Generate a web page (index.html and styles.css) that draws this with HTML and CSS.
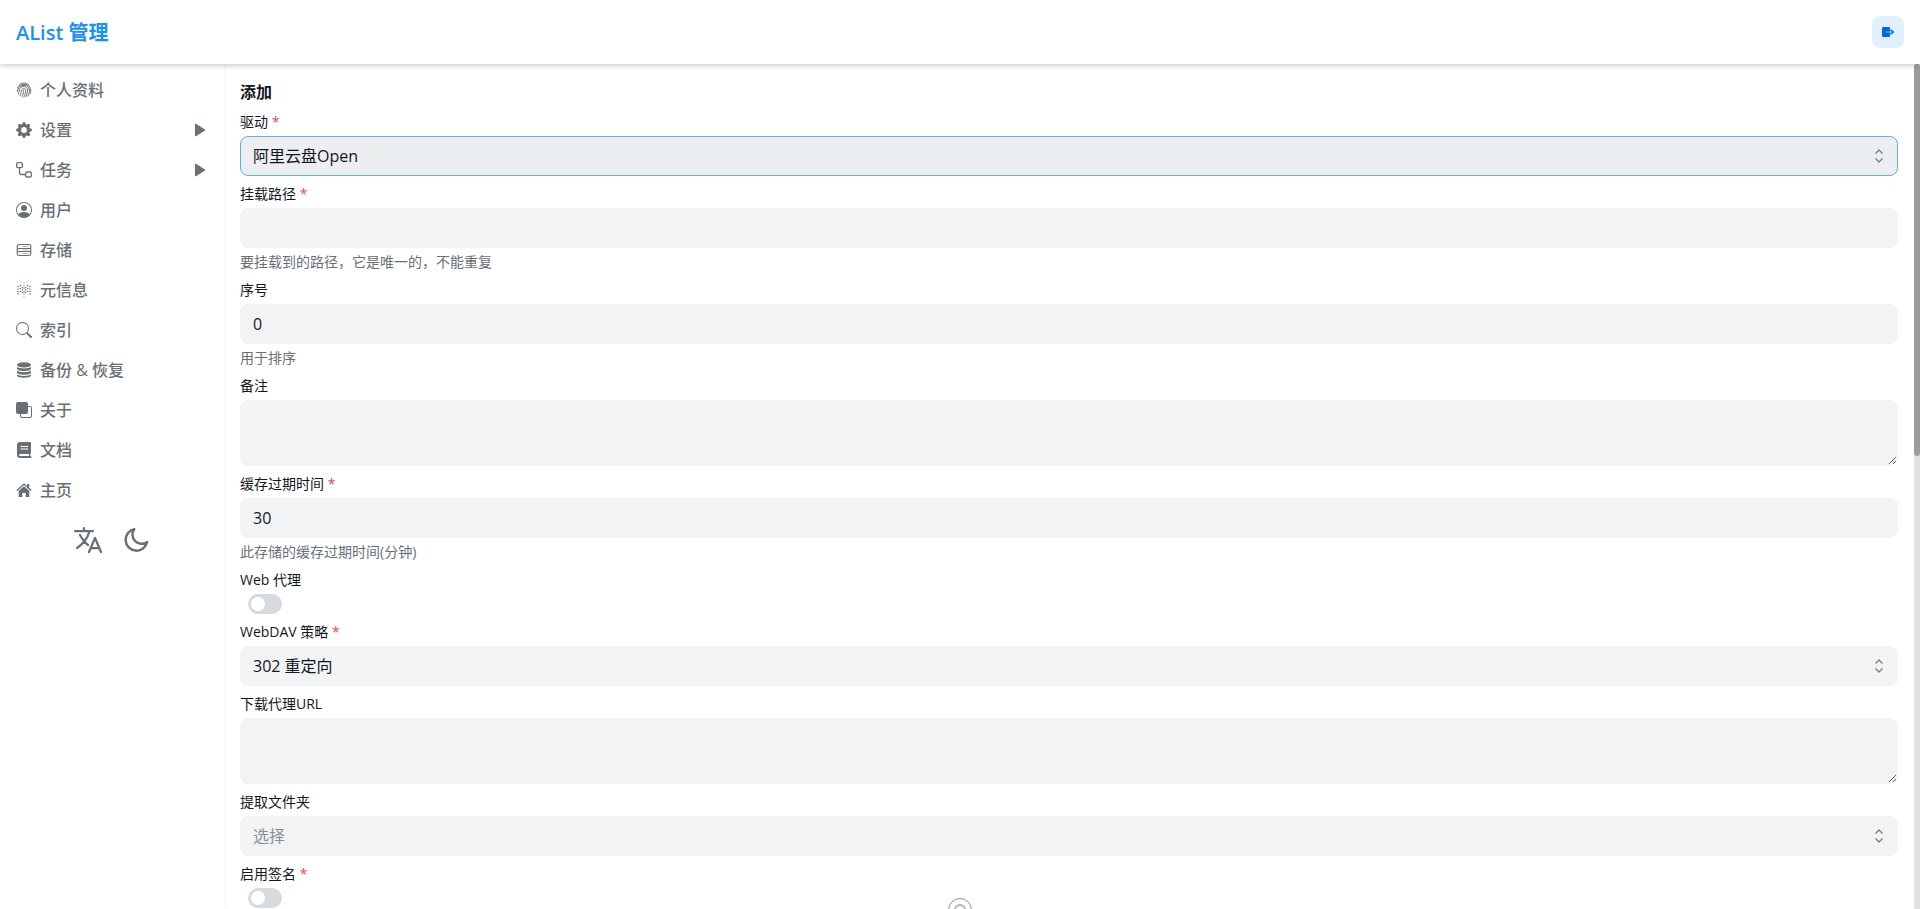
FILE: index.html
```
<!DOCTYPE html>
<html lang="zh-CN">
  <head>
    <meta charset="UTF-8" />
    <meta name="viewport" content="width=device-width, initial-scale=1.0" />
    <title>AList 管理</title>
    <link rel="stylesheet" href="styles.css">
  </head>
  <body>
    <header class="header">
      <a class="brand" href="#">AList 管理</a>
      <button class="logout" type="button" aria-label="退出登录">
        <svg viewBox="0 0 16 16" width="16" height="16">
          <rect x="2" y="3" width="8" height="10" rx="1.300" fill="currentColor"/>
          <path fill="#4d9bea" d="M6 7.300h4.500v1.400H6z"/>
          <path fill="currentColor" d="M10.600 4.700L14.400 8l-3.800 3.300V8.700h1V7.300h-1z"/>
        </svg>
      </button>
    </header>

    <div class="layout">
      <aside class="sidebar">
        <nav class="menu">
          <a class="menu-item" href="#">
            <svg class="icon" viewBox="0 0 16 16" fill="none" stroke="currentColor" stroke-width="1" stroke-linecap="round">
              <path d="M3.500 2.600C6 .4 10 .4 12.500 2.600M1.500 6C3 1.400 13 .6 14.300 6M1.200 9.500C1.500 2 13 1.200 13.200 7.500M2.300 12c1.200-2 .4-3.600 1.400-5.400C5.500 3.400 11.300 3.800 11.500 8c0 2-.4 4-1.400 6.500M4 13.500c1.600-2.400.8-4 1.500-5.500.8-1.900 4.200-1.700 4.200.6 0 2-.6 4-1.800 6.400M6 14.500c1.300-2.200 1.600-4.200 1.600-6.200M12 14c1.200-2 1.600-4 1.500-6M14.300 11.500c.5-1.500.6-3 .3-4.500"/>
            </svg>
            <span>个人资料</span>
          </a>
          <a class="menu-item" href="#">
            <svg class="icon" viewBox="0 0 16 16" fill="currentColor">
              <path d="M9.405 1.050c-.413-1.400-2.397-1.400-2.810 0l-.1.340a1.464 1.464 0 0 1-2.105.872l-.310-.170c-1.283-.698-2.686.705-1.987 1.987l.169.311c.446.820.023 1.841-.872 2.105l-.340.100c-1.400.413-1.400 2.397 0 2.810l.340.100a1.464 1.464 0 0 1 .872 2.105l-.170.310c-.698 1.283.705 2.686 1.987 1.987l.311-.169a1.464 1.464 0 0 1 2.105.872l.100.340c.413 1.400 2.397 1.400 2.810 0l.100-.340a1.464 1.464 0 0 1 2.105-.872l.310.170c1.283.698 2.686-.705 1.987-1.987l-.169-.311a1.464 1.464 0 0 1 .872-2.105l.340-.100c1.400-.413 1.400-2.397 0-2.810l-.340-.100a1.464 1.464 0 0 1-.872-2.105l.170-.310c.698-1.283-.705-2.686-1.987-1.987l-.311.169a1.464 1.464 0 0 1-2.105-.872l-.100-.340zM8 10.930a2.929 2.929 0 1 1 0-5.860 2.929 2.929 0 0 1 0 5.858z"/>
            </svg>
            <span>设置</span>
            <svg class="arrow" viewBox="0 0 16 16"><path d="M3.500 2v12L13 8z" fill="currentColor" stroke="currentColor" stroke-linejoin="round"/></svg>
          </a>
          <a class="menu-item" href="#">
            <svg class="icon" viewBox="0 0 16 16" fill="none" stroke="currentColor" stroke-width="1.300">
              <rect x="0.700" y="0.700" width="5.600" height="5" rx="1.300"/>
              <rect x="9.700" y="10" width="5.600" height="5" rx="1.300"/>
              <path d="M3.500 5.700v4.800a2 2 0 0 0 2 2h4.200"/>
            </svg>
            <span>任务</span>
            <svg class="arrow" viewBox="0 0 16 16"><path d="M3.500 2v12L13 8z" fill="currentColor" stroke="currentColor" stroke-linejoin="round"/></svg>
          </a>
          <a class="menu-item" href="#">
            <svg class="icon" viewBox="0 0 16 16" fill="currentColor">
              <path d="M11 6a3 3 0 1 1-6 0 3 3 0 0 1 6 0z"/>
              <path fill-rule="evenodd" d="M0 8a8 8 0 1 1 16 0A8 8 0 0 1 0 8zm8-7a7 7 0 0 0-5.468 11.370C3.242 11.226 4.805 10 8 10s4.757 1.225 5.468 2.370A7 7 0 0 0 8 1z"/>
            </svg>
            <span>用户</span>
          </a>
          <a class="menu-item" href="#">
            <svg class="icon" viewBox="0 0 16 16" fill="none" stroke="currentColor" stroke-width="1.200">
              <rect x="1.300" y="2.500" width="13.400" height="11" rx="1.500"/>
              <path d="M1.300 6.500h13.400M1.300 9.500h13.400"/>
              <path d="M3.300 4.500h1.200M6.500 4.500h6M3.300 8h1.200M6.500 8h6M3.300 11.500h1.200M6.500 11.500h6" stroke-width="0.500"/>
            </svg>
            <span>存储</span>
          </a>
          <a class="menu-item" href="#">
            <svg class="icon" viewBox="0 0 16 16" fill="none" stroke="currentColor" stroke-width="1.500" stroke-linecap="round">
              <path d="M2 4.500v8M14 4.500v8" stroke-dasharray="0 2.500"/>
              <path d="M4.500 3.500v9M11.500 3.500v9" stroke-dasharray="0 3"/>
              <path d="M6.500 5.500v6M9.500 5.500v6" stroke-dasharray="0 2.500"/>
              <path d="M8 1v14.500" stroke-dasharray="0 2.800" stroke-width="1.200"/>
            </svg>
            <span>元信息</span>
          </a>
          <a class="menu-item" href="#">
            <svg class="icon" viewBox="0 0 16 16" fill="currentColor">
              <path d="M11.742 10.344a6.500 6.500 0 1 0-1.397 1.398h-.001c.030.040.062.078.098.115l3.850 3.850a1 1 0 0 0 1.415-1.414l-3.850-3.850a1.007 1.007 0 0 0-.115-.100zM12 6.500a5.500 5.500 0 1 1-11 0 5.500 5.500 0 0 1 11 0z"/>
            </svg>
            <span>索引</span>
          </a>
          <a class="menu-item" href="#">
            <svg class="icon" viewBox="0 0 16 16" fill="currentColor">
              <ellipse cx="8" cy="2.900" rx="7" ry="2.700"/>
              <path d="M1 4.800c1.500 2.200 12.500 2.200 14 0v1.900c0 3-14 3-14 0zM1 8.600c1.500 2.200 12.500 2.200 14 0v1.900c0 3-14 3-14 0zM1 12.300c1.500 2.200 12.500 2.200 14 0v1.200c0 3-14 3-14 0z"/>
            </svg>
            <span>备份 &amp; 恢复</span>
          </a>
          <a class="menu-item" href="#">
            <svg class="icon" viewBox="0 0 16 16" fill="currentColor">
              <path d="M0 2a2 2 0 0 1 2-2h8a2 2 0 0 1 2 2v2h2a2 2 0 0 1 2 2v8a2 2 0 0 1-2 2H6a2 2 0 0 1-2-2v-2H2a2 2 0 0 1-2-2V2zm5 10v2a1 1 0 0 0 1 1h8a1 1 0 0 0 1-1V6a1 1 0 0 0-1-1h-2v5a2 2 0 0 1-2 2H5z"/>
            </svg>
            <span>关于</span>
          </a>
          <a class="menu-item" href="#">
            <svg class="icon" viewBox="0 0 16 16" fill="currentColor">
              <path fill-rule="evenodd" d="M4 0h10a1 1 0 0 1 1 1v10a1 1 0 0 1-.7 1v2h.2a1 1 0 0 1 0 2H4a3 3 0 0 1-3-3V3a3 3 0 0 1 3-3zm0 12a1 1 0 0 0 0 2h9v-2zM4.500 4v1h7.500V4zm0 2.400v1h7.500v-1z"/>
            </svg>
            <span>文档</span>
          </a>
          <a class="menu-item" href="#">
            <svg class="icon" viewBox="0 0 16 16" fill="currentColor">
              <path d="M8 1.300l3 2.600V2h2.200v3.800L15.600 8l-.8.900L8 3 1.200 8.900.4 8z"/>
              <path d="M8 4.200l5.300 4.600V15H9.700v-4H6.300v4H2.700V8.800z"/>
            </svg>
            <span>主页</span>
          </a>
        </nav>
        <div class="tools">
          <button class="tool" type="button" aria-label="语言">
            <svg viewBox="0 0 512 512" fill="none" stroke="currentColor" stroke-width="36" stroke-linecap="round" stroke-linejoin="round">
              <path d="M48 112h288M192 64v48M272 448l96-224 96 224M301.500 384h133M281.300 112S257 206 199 277 80 384 80 384M256 336s-35-27-72-75-56-85-56-85"/>
            </svg>
          </button>
          <button class="tool" type="button" aria-label="切换主题">
            <svg viewBox="-2 -2 28 28" fill="none" stroke="currentColor" stroke-width="2.200" stroke-linecap="round" stroke-linejoin="round">
              <path d="M10.500 2.500A9.500 9.500 0 1 0 21.700 13.700A8 8 0 0 1 10.500 2.500z"/>
            </svg>
          </button>
        </div>
      </aside>

      <main class="content">
        <h2 class="title">添加</h2>
        <form class="form">
          <div class="field">
            <label for="driver">驱动 <span class="required">*</span></label>
            <div class="select-box">
              <select class="control active" id="driver"><option>阿里云盘Open</option></select>
              <svg class="chevrons" viewBox="0 0 16 16"><path d="M4.500 5.500L8 2l3.500 3.500M4.500 10.500L8 14l3.500-3.500"/></svg>
            </div>
          </div>
          <div class="field">
            <label for="mount_path">挂载路径 <span class="required">*</span></label>
            <input class="control" id="mount_path" type="text">
            <p class="help">要挂载到的路径，它是唯一的，不能重复</p>
          </div>
          <div class="field">
            <label for="order">序号</label>
            <input class="control" id="order" type="text" value="0">
            <p class="help">用于排序</p>
          </div>
          <div class="field">
            <label for="remark">备注</label>
            <textarea class="control area" id="remark"></textarea>
          </div>
          <div class="field">
            <label for="cache">缓存过期时间 <span class="required">*</span></label>
            <input class="control" id="cache" type="text" value="30">
            <p class="help">此存储的缓存过期时间(分钟)</p>
          </div>
          <div class="field">
            <label for="web_proxy">Web 代理</label>
            <input class="switch" id="web_proxy" type="checkbox">
          </div>
          <div class="field">
            <label for="webdav">WebDAV 策略 <span class="required">*</span></label>
            <div class="select-box">
              <select class="control" id="webdav"><option>302 重定向</option></select>
              <svg class="chevrons" viewBox="0 0 16 16"><path d="M4.500 5.500L8 2l3.500 3.500M4.500 10.500L8 14l3.500-3.500"/></svg>
            </div>
          </div>
          <div class="field">
            <label for="proxy_url">下载代理URL</label>
            <textarea class="control area" id="proxy_url"></textarea>
          </div>
          <div class="field">
            <label for="extract">提取文件夹</label>
            <div class="select-box">
              <select class="control placeholder" id="extract"><option>选择</option></select>
              <svg class="chevrons" viewBox="0 0 16 16"><path d="M4.500 5.500L8 2l3.500 3.500M4.500 10.500L8 14l3.500-3.500"/></svg>
            </div>
          </div>
          <div class="field">
            <label for="sign">启用签名 <span class="required">*</span></label>
            <input class="switch" id="sign" type="checkbox">
          </div>
        </form>
      </main>
      <div class="scrollbar"><div class="thumb"></div></div>
    </div>

    <div class="float-dot"><span></span></div>
  </body>
</html>
```
FILE: styles.css
```
* {
  box-sizing: border-box;
}

body {
  margin: 0;
  height: 100vh;
  display: flex;
  flex-direction: column;
  overflow: hidden;
  font-family: "Open Sans", "Noto Sans CJK SC", sans-serif;
  font-size: 16px;
  line-height: 24px;
  color: #11181c;
  background-color: #fff;
}

button {
  border: none;
  padding: 0;
  cursor: pointer;
}

/* top bar */
.header {
  position: relative;
  z-index: 1;
  flex: none;
  display: flex;
  justify-content: space-between;
  align-items: center;
  height: 64px;
  padding: 0 16px;
  background-color: #fff;
  box-shadow: 0 1px 6px rgba(0, 0, 0, 0.25);
}

.brand {
  padding-top: 2px;
  font-size: 20px;
  font-weight: 600;
  color: #1890ff;
  text-decoration: none;
}

.logout {
  display: flex;
  justify-content: center;
  align-items: center;
  width: 32px;
  height: 32px;
  border-radius: 8px;
  color: #006adc;
  background-color: #e1f0ff;
}

.layout {
  flex: 1;
  display: flex;
  min-height: 0;
}

/* side menu */
.sidebar {
  flex: none;
  width: 224px;
  padding: 6px 8px;
  box-shadow: 1px 0 4px rgba(0, 0, 0, 0.05);
}

.menu-item {
  display: flex;
  align-items: center;
  gap: 8px;
  height: 40px;
  padding: 0 8px;
  color: #687076;
  font-weight: 500;
  text-decoration: none;
}

.icon,
.arrow {
  flex: none;
  width: 16px;
  height: 16px;
}

.arrow {
  margin-left: auto;
}

.tools {
  display: flex;
  justify-content: center;
  gap: 16px;
  padding-top: 14px;
}

.tool {
  width: 32px;
  height: 32px;
  color: #687076;
  background: none;
}

.tool svg {
  display: block;
}

/* form */
.content {
  flex: 1;
  min-width: 0;
  padding: 16px;
  overflow: hidden;
}

.title {
  margin: 0 0 8px;
  font-size: 16px;
  font-weight: 600;
}

.form {
  display: flex;
  flex-direction: column;
  gap: 8px;
}

.field {
  display: flex;
  flex-direction: column;
  align-items: flex-start;
  gap: 4px;
}

.field label {
  font-size: 14px;
  line-height: 20px;
}

.required {
  color: #e5484d;
}

.control {
  display: block;
  width: 100%;
  height: 40px;
  margin: 0;
  padding: 0 12px;
  border: 1px solid transparent;
  border-radius: 8px;
  outline: none;
  appearance: none;
  font: inherit;
  color: #11181c;
  background-color: #f1f3f5;
}

.control.active {
  border-color: #5eb0ef;
  background-color: #eceef0;
}

.control.placeholder {
  color: #889096;
}

.control.area {
  height: 66px;
  padding: 8px 12px;
  resize: vertical;
}

.select-box {
  position: relative;
  width: 100%;
}

.chevrons {
  position: absolute;
  top: 12px;
  right: 11px;
  width: 16px;
  height: 16px;
  fill: none;
  stroke: #7e868c;
  stroke-width: 1.5;
  pointer-events: none;
}

.help {
  margin: 0;
  font-size: 14px;
  line-height: 20px;
  color: #687076;
}

.switch {
  appearance: none;
  width: 34px;
  height: 20px;
  margin: 0 8px;
  padding: 3px;
  border-radius: 10px;
  background-color: #d7dbdf;
}

.switch::before {
  content: "";
  display: block;
  width: 14px;
  height: 14px;
  border-radius: 50%;
  background-color: #fff;
}

.scrollbar {
  flex: none;
  width: 6px;
  background-color: #e2e2e2;
}

.thumb {
  height: 46.4%;
  border-radius: 3px;
  background-color: #9c9c9c;
}

/* handle peeking over the bottom edge */
.float-dot {
  position: fixed;
  bottom: -13px;
  left: 50%;
  display: flex;
  justify-content: center;
  align-items: center;
  width: 24px;
  height: 24px;
  margin-left: -12px;
  border: 1px solid #8c8c8c;
  border-radius: 50%;
  background-color: #fff;
}

.float-dot span {
  width: 12px;
  height: 12px;
  border: 2px solid #b5b5b5;
  border-radius: 50%;
}
```
